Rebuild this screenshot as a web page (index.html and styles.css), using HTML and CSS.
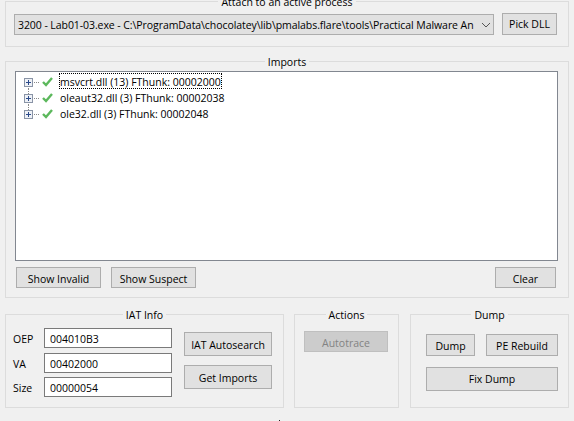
FILE: index.html
```html
<!DOCTYPE html>
<html lang="en">
<head>
    <meta charset="UTF-8">
    <title>Scylla</title>
    <link rel="stylesheet" href="styles.css">
</head>
<body>

    <div class="window">
        <!-- Process picker -->
        <fieldset class="group">
            <legend>Attach to an active process</legend>
            <div class="attach">
                <div class="combo">
                    <span class="combo-text">3200 - Lab01-03.exe - C:\ProgramData\chocolatey\lib\pmalabs.flare\tools\Practical Malware An</span>
                    <svg class="combo-arrow" width="10" height="6" viewBox="0 0 10 6"><path d="M1 1l4 4 4-4" fill="none" stroke="#555" stroke-width="1"/></svg>
                </div>
                <button class="btn pick-dll">Pick DLL</button>
            </div>
        </fieldset>

        <!-- Imports tree -->
        <fieldset class="group imports-group">
            <legend>Imports</legend>
            <div class="imports">
                <div class="tree">
                    <div class="tree-row">
                        <svg class="tree-icons" width="43" height="16" viewBox="0 0 43 16">
                            <path d="M12.5 13v3" stroke="#888" stroke-dasharray="1 1"/>
                            <rect x="8.5" y="5.5" width="8" height="8" fill="#eef1f6" stroke="#8a94a6"/>
                            <path d="M10 9.5h5M12.5 7v5" stroke="#2b4a8a"/>
                            <path d="M18 9.5h5" stroke="#888" stroke-dasharray="1 1"/>
                            <path d="M27 9l3 3 6-7" fill="none" stroke="#5cb85c" stroke-width="2.4"/>
                        </svg>
                        <span class="tree-label selected">msvcrt.dll (13) FThunk: 00002000</span>
                    </div>
                    <div class="tree-row">
                        <svg class="tree-icons" width="43" height="16" viewBox="0 0 43 16">
                            <path d="M12.5 0v5M12.5 13v3" stroke="#888" stroke-dasharray="1 1"/>
                            <rect x="8.5" y="5.5" width="8" height="8" fill="#eef1f6" stroke="#8a94a6"/>
                            <path d="M10 9.5h5M12.5 7v5" stroke="#2b4a8a"/>
                            <path d="M18 9.5h5" stroke="#888" stroke-dasharray="1 1"/>
                            <path d="M27 9l3 3 6-7" fill="none" stroke="#5cb85c" stroke-width="2.4"/>
                        </svg>
                        <span class="tree-label">oleaut32.dll (3) FThunk: 00002038</span>
                    </div>
                    <div class="tree-row">
                        <svg class="tree-icons" width="43" height="16" viewBox="0 0 43 16">
                            <path d="M12.5 0v5" stroke="#888" stroke-dasharray="1 1"/>
                            <rect x="8.5" y="5.5" width="8" height="8" fill="#eef1f6" stroke="#8a94a6"/>
                            <path d="M10 9.5h5M12.5 7v5" stroke="#2b4a8a"/>
                            <path d="M18 9.5h5" stroke="#888" stroke-dasharray="1 1"/>
                            <path d="M27 9l3 3 6-7" fill="none" stroke="#5cb85c" stroke-width="2.4"/>
                        </svg>
                        <span class="tree-label">ole32.dll (3) FThunk: 00002048</span>
                    </div>
                </div>
                <div class="imports-buttons">
                    <button class="btn show-btn">Show Invalid</button>
                    <button class="btn show-btn">Show Suspect</button>
                    <button class="btn clear-btn">Clear</button>
                </div>
            </div>
        </fieldset>

        <div class="bottom">
            <!-- IAT info -->
            <fieldset class="group iat-group">
                <legend>IAT Info</legend>
                <div class="iat">
                    <div class="iat-fields">
                        <label>OEP</label><div class="field">004010B3</div>
                        <label>VA</label><div class="field">00402000</div>
                        <label>Size</label><div class="field">00000054</div>
                    </div>
                    <div class="iat-buttons">
                        <button class="btn">IAT Autosearch</button>
                        <button class="btn">Get Imports</button>
                    </div>
                </div>
            </fieldset>

            <fieldset class="group actions-group">
                <legend>Actions</legend>
                <div class="actions">
                    <button class="btn disabled">Autotrace</button>
                </div>
            </fieldset>

            <fieldset class="group dump-group">
                <legend>Dump</legend>
                <div class="dump">
                    <div class="dump-top">
                        <button class="btn dump-btn">Dump</button>
                        <button class="btn rebuild-btn">PE Rebuild</button>
                    </div>
                    <button class="btn fix-btn">Fix Dump</button>
                </div>
            </fieldset>
        </div>
    </div>

    <!-- bit of the next control, cut off by the window edge -->
    <span class="cut-mark"></span>

</body>
</html>
```

FILE: styles.css
```css
/* Body styling */
html, body {
    height: 100%;
    overflow: hidden;
}

body {
    margin: 0;
    background: #f0f0f0;
    color: #000;
    font-family: 'Open Sans', 'Noto Sans', sans-serif;
    font-size: 10.5px;
}

.window {
    width: 564px;
    margin: -7px 0 0 5px;
}

.cut-mark {
    position: absolute;
    left: 279px;
    top: 420px;
    width: 1px;
    height: 1px;
    background: #222;
}

/* Group boxes */
.group {
    box-sizing: border-box;
    min-width: 0;
    margin: 0;
    padding: 0;
    border: 1px solid #dcdcdc;
}

.group legend {
    margin: 0 auto;
    padding: 0 3px;
    height: 16px;
    line-height: 18px;
}

/* Buttons */
.btn {
    box-sizing: border-box;
    display: block;
    padding: 1px 0 0;
    background: #e1e1e1;
    border: 1px solid #adadad;
    color: #000;
    font: inherit;
}

.btn.disabled {
    background: #cccccc;
    border-color: #bfbfbf;
    color: #838383;
}

/* Process picker */
.attach {
    display: flex;
    align-items: flex-start;
    padding: 4px 11px 11px 8px;
}

.combo {
    box-sizing: border-box;
    display: flex;
    align-items: center;
    width: 480px;
    height: 21px;
    margin-top: 1px;
    padding: 1px 2px 0 3px;
    background: #e1e1e1;
    border: 1px solid #adadad;
}

.combo-text {
    flex: 1;
    overflow: hidden;
    white-space: nowrap;
    letter-spacing: -0.07px;
}

.combo-arrow {
    flex: none;
    margin-left: 2px;
}

.pick-dll {
    width: 55px;
    height: 22px;
    margin-left: 8px;
    padding-top: 0;
}

/* Imports */
.imports-group {
    margin-top: 6px;
}

.imports {
    padding: 2px 10px 9px 9px;
}

.tree {
    box-sizing: border-box;
    height: 190px;
    padding-top: 1px;
    background: #fff;
    border: 1px solid #828790;
}

.tree-row {
    display: flex;
    height: 16px;
}

.tree-icons {
    flex: none;
}

.tree-label {
    height: 14px;
    line-height: 16px;
    border: 1px dotted transparent;
    white-space: nowrap;
}

.tree-label.selected {
    border-color: #000;
}

.imports-buttons {
    display: flex;
    gap: 10px;
    margin: 6px 2px 0 1px;
}

.show-btn {
    width: 85px;
    height: 21px;
    padding-top: 2px;
}

.clear-btn {
    width: 61px;
    height: 21px;
    margin-left: auto;
    padding-top: 2px;
}

/* Bottom row */
.bottom {
    display: flex;
    gap: 10px;
    margin-top: 8px;
}

.bottom .group {
    height: 102px;
}

.iat-group {
    width: 279px;
}

.iat {
    display: flex;
    padding: 6px 0 0 7px;
}

.iat-fields {
    display: grid;
    grid-template-columns: 31px 128px;
    grid-template-rows: 25px 24px 20px;
    align-items: start;
}

.iat-fields label {
    line-height: 22px;
}

.field {
    box-sizing: border-box;
    height: 20px;
    padding-left: 5px;
    line-height: 20px;
    background: #fff;
    border: 1px solid #7a7a7a;
}

.iat-buttons {
    display: flex;
    flex-direction: column;
    gap: 9px;
    margin: 4px 0 0 12px;
}

.iat-buttons .btn {
    width: 88px;
    height: 24px;
}

.actions-group {
    width: 105px;
}

.actions {
    padding: 9px 0 0 9px;
}

.actions .btn {
    width: 84px;
    height: 21px;
    padding-top: 2px;
}

.dump-group {
    width: 159px;
    margin-left: 1px;
}

.dump {
    padding: 12px 0 0 15px;
}

.dump-top {
    display: flex;
    gap: 11px;
}

.dump-btn {
    width: 49px;
    height: 22px;
}

.rebuild-btn {
    width: 72px;
    height: 22px;
}

.fix-btn {
    width: 132px;
    height: 24px;
    margin-top: 11px;
    padding-top: 0;
}
```
